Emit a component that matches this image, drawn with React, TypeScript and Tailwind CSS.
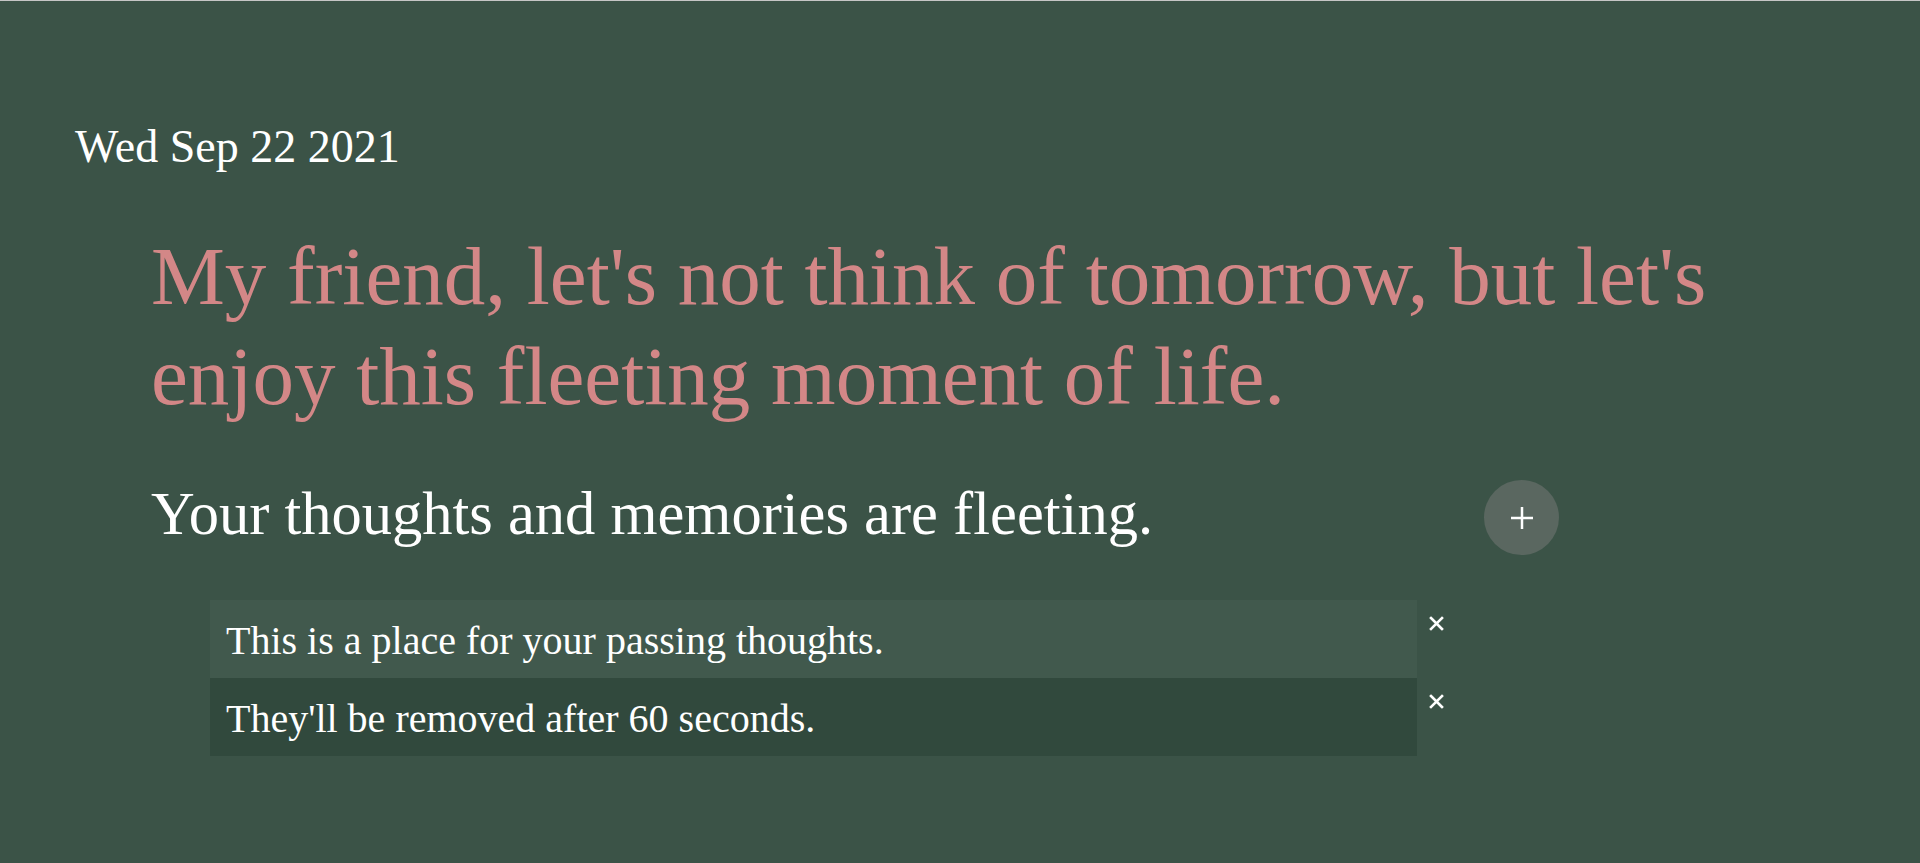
import { useState } from "react";

type Thought = {
  id: number;
  text: string;
};

const initialThoughts: Thought[] = [
  { id: 1, text: "This is a place for your passing thoughts." },
  { id: 2, text: "They'll be removed after 60 seconds." },
];

export default function App() {
  const [draft, setDraft] = useState("Your thoughts and memories are fleeting.");
  const [thoughts, setThoughts] = useState<Thought[]>(initialThoughts);

  function handleAdd() {
    if (!draft.trim()) return;
    setThoughts((state) => [{ id: Date.now(), text: draft }, ...state]);
    setDraft("");
  }

  function handleRemove(id: number) {
    setThoughts((state) => state.filter((t) => t.id !== id));
  }

  return (
    <div
      className="min-h-screen border-t border-[#c6c6c6] bg-[#3b5347] text-white"
      style={{ fontFamily: '"Liberation Serif", "Times New Roman", serif' }}
    >
      <header className="px-[75px] pt-[116px]">
        <h2 className="text-[46px] leading-[60px]">Wed Sep 22 2021</h2>
      </header>

      <main className="px-[151px] pb-10">
        <h1 className="mt-[49px] max-w-[1620px] text-[83px] leading-[100px] text-[#d38787]">
          My friend, let's not think of tomorrow, but let's enjoy this fleeting
          moment of life.
        </h1>

        <div className="mt-[54px] flex w-[1408px] items-center">
          <input
            className="h-[75px] flex-1 bg-transparent pb-[6px] text-[60.5px] text-white caret-[#d38787] outline-none"
            value={draft}
            autoFocus
            onChange={(e) => setDraft(e.target.value)}
            onKeyDown={(e) => {
              if (e.key === "Enter") handleAdd();
            }}
          />

          <button
            className="flex h-[75px] w-[75px] shrink-0 items-center justify-center rounded-full bg-[#5a6760] hover:brightness-110"
            onClick={handleAdd}
          >
            <svg width="24" height="24" viewBox="0 0 24 24">
              <path d="M12 1v22M1 12h22" stroke="white" strokeWidth="2.5" />
            </svg>
          </button>
        </div>

        <ul className="ml-[59px] mt-[45px] flex flex-col">
          {thoughts.map((thought, i) => (
            <li key={thought.id} className="flex items-start">
              <div
                className={
                  "flex h-[78px] w-[1207px] items-center px-[16px] pt-[3px] text-[40px] " +
                  (i % 2 === 0 ? "bg-[#41594d]" : "bg-[#31493d]")
                }
              >
                {thought.text}
              </div>
              <button
                className="ml-[12px] mt-[16px]"
                onClick={() => handleRemove(thought.id)}
              >
                <svg width="15" height="15" viewBox="0 0 15 15">
                  <path
                    d="M2 2l11 11M13 2L2 13"
                    stroke="white"
                    strokeWidth="2.6"
                    strokeLinecap="square"
                  />
                </svg>
              </button>
            </li>
          ))}
        </ul>
      </main>
    </div>
  );
}
